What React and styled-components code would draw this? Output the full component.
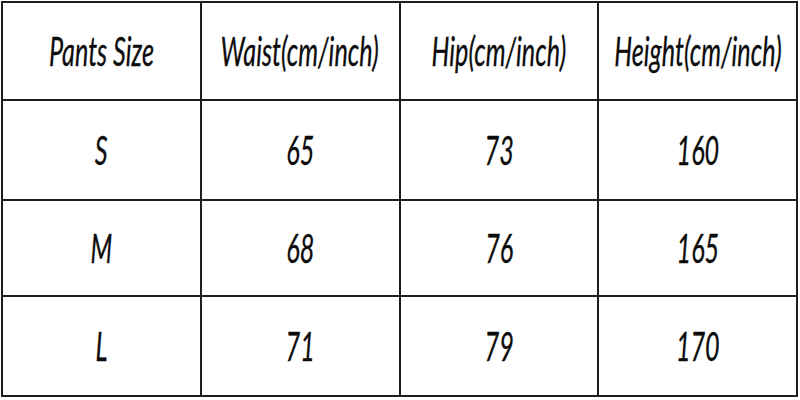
import React from 'react'
import styled, { createGlobalStyle } from 'styled-components'

const GlobalStyle = createGlobalStyle`
  html, body {
    margin: 0;
    padding: 0;
    background: #fff;
  }
`

const Table = styled.div`
  display: grid;
  grid-template-columns: repeat(4, 1fr);
  grid-template-rows: 96px 98px 94px 98px;
  gap: 2px;
  padding: 2px;
  margin: 1px 0 0 1px;
  width: 797px;
  box-sizing: border-box;
  background: #1e1e1e;
`

const Cell = styled.div`
  background: #fff;
  display: flex;
  align-items: center;
  justify-content: center;
  overflow: hidden;
`

const Label = styled.span`
  display: inline-block;
  font-family: Lato, "Open Sans", sans-serif;
  font-style: italic;
  font-size: 40px;
  line-height: 1;
  color: #0c0c0c;
  white-space: nowrap;
  -webkit-text-stroke: 0.3px #0c0c0c;
  transform: scaleX(${props => props.$squeeze});
`

const rows = [
  ['Pants Size', 'Waist(cm/inch)', 'Hip(cm/inch)', 'Height(cm/inch)'],
  ['S', '65', '73', '160'],
  ['M', '68', '76', '165'],
  ['L', '71', '79', '170'],
]

export default function App () {
  return (
    <>
      <GlobalStyle />
      <Table>
        {rows.map((row, r) =>
          row.map((text, c) => (
            <Cell key={`${r}-${c}`}>
              <Label $squeeze={0.63}>{text}</Label>
            </Cell>
          ))
        )}
      </Table>
    </>
  )
}
